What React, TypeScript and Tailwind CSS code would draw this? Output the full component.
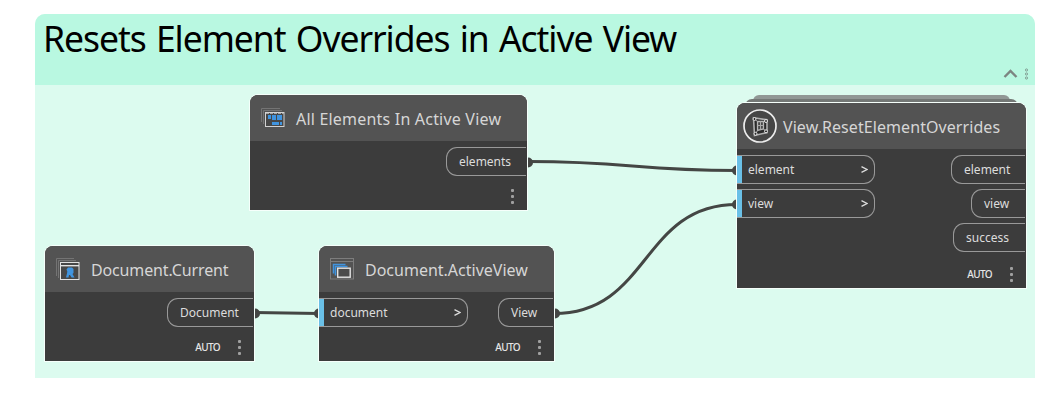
import type { ReactNode } from "react";

function Dots() {
  return (
    <div className="flex w-[3px] flex-col gap-[3px]">
      <i className="size-[3px] rounded-[1px] bg-[#a0a0a0]" />
      <i className="size-[3px] rounded-[1px] bg-[#a0a0a0]" />
      <i className="size-[3px] rounded-[1px] bg-[#a0a0a0]" />
    </div>
  );
}

function InPort({ label }: { label: string }) {
  return (
    <div className="flex h-[29px] items-center rounded-r-[11px] border border-l-0 border-[#999999] pr-[6px] text-[12px] text-[#dcdcdc]">
      <i className="h-[27px] w-[5px] bg-[#6ac0e7]" />
      <span className="ml-[6px] grow">{label}</span>
      <svg width="8" height="9" viewBox="0 0 8 9" fill="none" stroke="#dcdcdc" strokeWidth="1.4">
        <path d="M1.5 1.7 7 4.5 1.5 7.3" />
      </svg>
    </div>
  );
}

function OutPort({ label, width }: { label: string; width: string }) {
  return (
    <div className={`flex h-[29px] items-center rounded-l-[11px] border border-r-0 border-[#999999] pl-[12px] text-[12px] text-[#dcdcdc] ${width}`}>
      <span>{label}</span>
    </div>
  );
}

interface NodeProps {
  place: string;
  title: string;
  titleClass: string;
  icon: ReactNode;
  inputs?: ReactNode;
  outputs: ReactNode;
  auto?: boolean;
}

function GraphNode({ place, title, titleClass, icon, inputs, outputs, auto }: NodeProps) {
  return (
    <section className={`absolute flex flex-col rounded-t-[8px] bg-[#3c3c3c] shadow-[0_0_0_1px_#f6fffb] ${place}`}>
      <header className="flex h-[46px] shrink-0 items-center rounded-t-[8px] bg-[#535353]">
        {icon}
        <h2 className={`whitespace-nowrap pt-[2px] text-[16px] text-[#d6d6d6] ${titleClass}`}>{title}</h2>
      </header>
      <div className="flex grow justify-between pt-[6px]">
        <div className="flex flex-col gap-[5px]">{inputs}</div>
        <div className="flex flex-col items-end gap-[5px] pr-px">{outputs}</div>
      </div>
      <footer className="flex h-[28px] shrink-0 items-center justify-end gap-[18px] pr-[13px]">
        {auto && (
          <span className="pt-px text-[10px] font-medium tracking-[-0.6px] text-[#e6e6e6]">AUTO</span>
        )}
        <Dots />
      </footer>
    </section>
  );
}

function ElementsIcon() {
  return (
    <svg className="ml-[11px] shrink-0" width="24" height="22" fill="none">
      <path d="M.5 15V1.5H19M2.5 17V3.5H21" stroke="#747474" />
      <rect x="4.5" y="5.5" width="18.5" height="14" fill="#474747" stroke="#d2d2d2" />
      <path d="M5 6.5H23" stroke="#a6a6a6" strokeDasharray="3 1" />
      <path d="M7 8h3v4H7zM11 8h4v5h-4zM16 8h5v5h-5zM11 15h7v3h-7zM19 15h2v3h-2z" fill="#4094df" />
    </svg>
  );
}

function DocumentIcon() {
  return (
    <svg className="ml-[11px] shrink-0" width="24" height="24" fill="none">
      <path d="M.5 19V1.5H18M2.5 21V3.5H20" stroke="#747474" />
      <rect x="4.5" y="5.5" width="18.5" height="17" fill="#474747" stroke="#e2e2e2" />
      <path d="M5 8.7H23" stroke="#ededed" strokeWidth="1.3" />
      <path d="M10.5 12.5 12 10.5h4l1.5 1.5v4l-1 1 2 3.5h-3l-1.5-2.5h-1l-.5 2.5h-2.5l1-4 .3-2z" fill="#4094df" />
    </svg>
  );
}

function ViewsIcon() {
  return (
    <svg className="ml-[11px] shrink-0" width="24" height="22" fill="none">
      <rect x=".5" y=".5" width="23" height="20.5" stroke="#7d7d7d" />
      <path d="M1 3.5h22" stroke="#7d7d7d" />
      <path d="M3.500 15.500V6.500H15.500M5.500 17.500V8.500H17.500" stroke="#4094df" strokeWidth="1.500" />
      <rect x="7.700" y="10.200" width="12.500" height="9" fill="#4b4b4b" stroke="#e4e4e4" strokeWidth="1.400" />
    </svg>
  );
}

function DynamoIcon() {
  return (
    <svg className="ml-[6px] shrink-0" width="34" height="34" fill="none">
      <circle cx="17" cy="17" r="16" fill="#464646" stroke="#ececec" strokeWidth="1.7" />
      <path d="M10.500 8.800 24 10.800V23.500L11.500 26.500Z" fill="#2b2b2b" stroke="#b0b0b0" strokeWidth="1.600" />
      <path d="M14.500 12.500H20.500V20L14.500 21.500Z" fill="#4a4a4a" stroke="#b8b8b8" strokeWidth="1.300" />
      <path d="M17.500 12.500V20.500M14.500 16.500H20.500M11 9.500l3.500 3M24 11.500l-3.500 1.500M24 22.500l-3.500-2.500M12 25.500l2.500-4" stroke="#a8a8a8" />
      <g fill="#2b2b2b" stroke="#e4e4e4">
        <circle cx="11.500" cy="10" r="1.500" />
        <circle cx="23" cy="12" r="1.500" />
        <circle cx="12.500" cy="24.800" r="1.500" />
        <circle cx="23" cy="22.300" r="1.500" />
      </g>
    </svg>
  );
}

export default function App() {
  return (
    <main className="h-[406px] w-[1060px] bg-white pl-[35px] pt-[14px] font-['Noto_Sans',sans-serif]">
      <div className="relative h-[364px] w-[1000px] rounded-t-[10px] bg-[#dcfbef]">
        <header className="flex h-[71px] justify-between rounded-t-[10px] bg-[#b9f8e1] pl-[8px] pr-[6px]">
          <h1 className="whitespace-nowrap text-[35.5px] leading-[49px] tracking-[-1.05px] text-black [word-spacing:2.1px]">
            Resets Element Overrides in Active View
          </h1>
          <div className="mt-[54px] flex h-[12px] items-center gap-[6px]">
            <svg width="15" height="10" fill="none" stroke="#7c8581" strokeWidth="2.4">
              <path d="m1.500 8 6-6 6 6" />
            </svg>
            <svg width="5" height="12" fill="none" stroke="#829e93">
              <circle cx="2.5" cy="2" r="1.1" />
              <circle cx="2.5" cy="6" r="1.1" />
              <circle cx="2.5" cy="10" r="1.1" />
            </svg>
          </div>
        </header>

        <svg className="absolute left-0 top-0" width="1000" height="364" fill="none" stroke="#444644" strokeWidth="3">
          <path d="M493 147.500C595 147.500 600 156.500 702 156.500" />
          <path d="M219 298.500 284 299.500" />
          <path d="M519 299.500C615 299.500 606 190.500 702 190.500" />
          <g fill="#444644" stroke="none">
            <circle cx="493" cy="148.500" r="5" />
            <circle cx="702" cy="156.500" r="5" />
            <circle cx="702" cy="190.500" r="5" />
            <circle cx="220" cy="299.500" r="5" />
            <circle cx="284" cy="299.500" r="5" />
            <circle cx="520" cy="299.500" r="5" />
          </g>
        </svg>

        <GraphNode
          place="left-[215px] top-[81px] h-[115px] w-[277px]"
          title="All Elements In Active View"
          titleClass="ml-[11px] tracking-[0.2px]"
          icon={<ElementsIcon />}
          outputs={<OutPort label="elements" width="w-[80px]" />}
        />
        <GraphNode
          place="left-[10px] top-[232px] h-[115px] w-[209px]"
          title="Document.Current"
          titleClass="ml-[11px] tracking-[-0.14px]"
          icon={<DocumentIcon />}
          outputs={<OutPort label="Document" width="w-[86px]" />}
          auto
        />
        <GraphNode
          place="left-[284px] top-[232px] h-[115px] w-[235px]"
          title="Document.ActiveView"
          titleClass="ml-[11px]"
          icon={<ViewsIcon />}
          inputs={<div className="w-[149px]"><InPort label="document" /></div>}
          outputs={<OutPort label="View" width="w-[55px]" />}
          auto
        />
        <div className="absolute left-[718px] top-[81px] h-[10px] w-[257px] rounded-t-[6px] bg-[#919795]" />
        <div className="absolute left-[710px] top-[85px] h-[10px] w-[273px] rounded-t-[7px] bg-[#747876]" />
        <GraphNode
          place="left-[702px] top-[89px] h-[185px] w-[289px]"
          title="View.ResetElementOverrides"
          titleClass="ml-[6px] tracking-[0.07px]"
          icon={<DynamoIcon />}
          inputs={
            <div className="flex w-[138px] flex-col gap-[5px]">
              <InPort label="element" />
              <InPort label="view" />
            </div>
          }
          outputs={
            <>
              <OutPort label="element" width="w-[74px]" />
              <OutPort label="view" width="w-[54px]" />
              <OutPort label="success" width="w-[72px]" />
            </>
          }
          auto
        />
      </div>
    </main>
  );
}
